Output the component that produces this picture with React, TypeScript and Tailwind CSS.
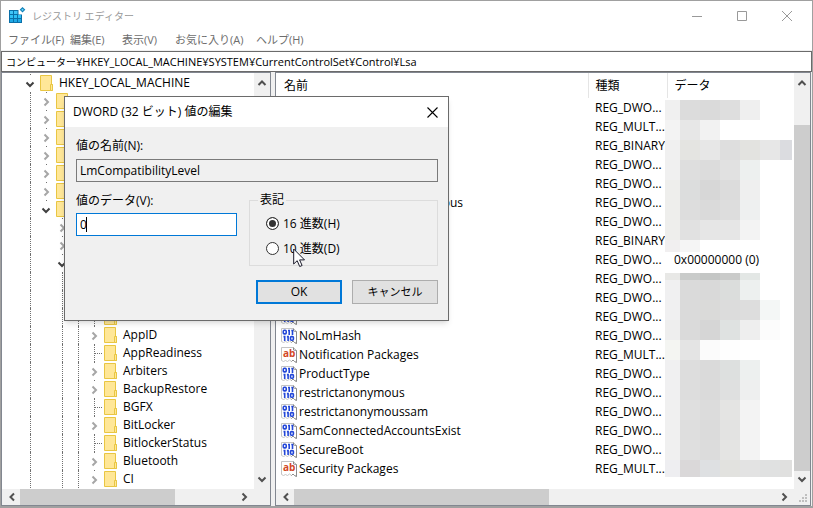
import type { ReactNode } from "react";

type TreeNode = {
  level: number;
  label: string;
  state: "open" | "closed" | "leaf";
};

type RegValue = {
  name: string;
  kind: "bin" | "str";
  type: string;
  data?: string;
};

const tree: TreeNode[] = [
  { level: 0, label: "HKEY_LOCAL_MACHINE", state: "open" },
  { level: 1, label: "BCD", state: "closed" },
  { level: 1, label: "", state: "closed" },
  { level: 1, label: "", state: "closed" },
  { level: 1, label: "", state: "closed" },
  { level: 1, label: "", state: "closed" },
  { level: 1, label: "", state: "closed" },
  { level: 1, label: "", state: "open" },
  { level: 2, label: "", state: "closed" },
  { level: 2, label: "", state: "closed" },
  { level: 2, label: "", state: "open" },
  { level: 3, label: "", state: "open" },
  { level: 4, label: "", state: "closed" },
  { level: 4, label: "ACPI", state: "leaf" },
  { level: 4, label: "AppID", state: "closed" },
  { level: 4, label: "AppReadiness", state: "leaf" },
  { level: 4, label: "Arbiters", state: "closed" },
  { level: 4, label: "BackupRestore", state: "closed" },
  { level: 4, label: "BGFX", state: "leaf" },
  { level: 4, label: "BitLocker", state: "closed" },
  { level: 4, label: "BitlockerStatus", state: "leaf" },
  { level: 4, label: "Bluetooth", state: "closed" },
  { level: 4, label: "CI", state: "closed" },
];

const values: RegValue[] = [
  { name: "", kind: "bin", type: "REG_DWO..." },
  { name: "", kind: "str", type: "REG_MULT..." },
  { name: "", kind: "bin", type: "REG_BINARY" },
  { name: "", kind: "bin", type: "REG_DWO..." },
  { name: "", kind: "bin", type: "REG_DWO..." },
  { name: "everyoneincludesanonymous", kind: "bin", type: "REG_DWO..." },
  { name: "", kind: "bin", type: "REG_DWO..." },
  { name: "", kind: "bin", type: "REG_BINARY" },
  { name: "", kind: "bin", type: "REG_DWO...", data: "0x00000000 (0)" },
  { name: "", kind: "bin", type: "REG_DWO..." },
  { name: "", kind: "bin", type: "REG_DWO..." },
  { name: "LsaPid", kind: "bin", type: "REG_DWO..." },
  { name: "NoLmHash", kind: "bin", type: "REG_DWO..." },
  { name: "Notification Packages", kind: "str", type: "REG_MULT..." },
  { name: "ProductType", kind: "bin", type: "REG_DWO..." },
  { name: "restrictanonymous", kind: "bin", type: "REG_DWO..." },
  { name: "restrictanonymoussam", kind: "bin", type: "REG_DWO..." },
  { name: "SamConnectedAccountsExist", kind: "bin", type: "REG_DWO..." },
  { name: "SecureBoot", kind: "bin", type: "REG_DWO..." },
  { name: "Security Packages", kind: "str", type: "REG_MULT..." },
];

// Masked data: y, height, then one colour per 20px block
const mosaic: [number, number, string[]][] = [
  [0, 20, ["#f0f0f0", "#dcdcdc", "#dadada", "#dedede", "#efefef"]],
  [20, 20, ["#f3f3f3", "#e7e7e7", "#f2f2f2"]],
  [40, 20, ["#f0f0f0", "#e4e4e1", "#e7e7e7", "#dedede", "#e3e3e0", "#e7e7e7", "#dbdce0"]],
  [60, 20, ["#f0f0f0", "#dedede", "#dcdcdc", "#e1e1e1", "#edf0ef"]],
  [80, 20, ["#eeeeec", "#dcdddd", "#d7d7d7", "#dcdcdc", "#efefef"]],
  [100, 20, ["#eeeeec", "#dddddd", "#dadada", "#dddddd", "#eef0f0"]],
  [120, 20, ["#eeeeec", "#e1e1e1", "#e6e6e6", "#e6e6e6", "#f3f3f3"]],
  [140, 12, ["#f1eff0", "#f5f5f5"]],
  [173, 7, ["#e8e8e6", "#c9cbca", "#c4c6c5", "#cacbca", "#e3e7e5"]],
  [180, 20, ["#f0f0f1", "#dadada", "#d9d9d9", "#dbdddc", "#edf0ef"]],
  [200, 20, ["#f0f0f1", "#dadada", "#dadad9", "#dcdcdc", "#dddddd", "#f4f7f6"]],
  [220, 20, ["#eeeeee", "#dadada", "#d6d6d6", "#dfe2e1", "#eeeeee", "#fcfcfc"]],
  [240, 20, ["#f4f5f2", "#e4e4e4", "#fbfbfb", "#fefefe"]],
  [260, 20, ["#f0f0f1", "#dddddd", "#dadada", "#dde0df", "#edf0ef"]],
  [280, 20, ["#f0f0f1", "#dddddd", "#dadada", "#dfe0e0", "#eeefef"]],
  [300, 20, ["#f0f0f0", "#dfdfdf", "#dcdcdc", "#e4e4e3", "#f3f3f3"]],
  [320, 20, ["#f0f0f0", "#dedede", "#dbdbdb", "#e3e3e2", "#f3f3f3"]],
  [340, 20, ["#f0f0f0", "#dfdfdf", "#dcdcdc", "#e4e4e3", "#f3f3f3"]],
  [360, 17, ["#eeeef1", "#dad8d9", "#dee0e2", "#e2e2df", "#e3e3e3", "#e0e1e1", "#e0e0df"]],
];

const chevrons = {
  up: "M1.5 7 5 3.5 8.5 7",
  down: "M1.5 3.5 5 7 8.5 3.5",
  left: "M7 1.5 3.5 5 7 8.5",
  right: "M3.5 1.5 7 5 3.5 8.5",
};

const Chevron = ({ dir, className }: { dir: keyof typeof chevrons; className?: string }) => (
  <svg width="10" height="10" viewBox="0 0 10 10" fill="none" stroke="currentColor" strokeWidth="2" className={className}>
    <path d={chevrons[dir]} />
  </svg>
);

const RegeditIcon = () => (
  <svg width="17" height="17" viewBox="0 0 17 17" className="shrink-0">
    <path d="M0 3h9.500v4.500H13V16H0z" fill="#0a6fa8" />
    <path d="M1 4h3v3H1zM5 4h3.500v3H5z" fill="#3fc4f7" />
    <path d="M1 8h3v3H1zM5 8h3v3H5zM9 8h3v3H9z" fill="#2fc0f5" />
    <path d="M1 12h3v3H1zM5 12h3v3H5zM9 12h3v3H9z" fill="#1ea9e6" />
    <path d="M13.500 0 16.300 2.800 13.500 5.600 10.700 2.800z" fill="#0a7db5" />
    <circle cx="13.500" cy="2.800" r="1" fill="#6fd6fb" />
  </svg>
);

const FolderIcon = () => (
  <svg width="13" height="16" viewBox="0 0 13 16" className="shrink-0">
    <path d="M.5.500h11v9h1v6H.5z" fill="#ffe798" stroke="#e9c643" />
    <path d="M10.500 15.500v-6h2v6z" fill="#ffe798" stroke="#e9c643" />
  </svg>
);

const ValueIcon = ({ kind }: { kind: RegValue["kind"] }) => (
  <svg width="16" height="16" viewBox="0 0 16 16" fill="none" className="shrink-0">
    <path d="M.5.500h12l3 3v12l-2-1-1.500-1.500-1.500 1.500-2-1.500-2 1.500-2-1-2 1-2-1z" fill="#fff" stroke="#c4c4c4" />
    <path d="M12.500.500v2.500l3 .5v12l-2-1-1.500-1.500-1.500 1.500" stroke="#8c8c8c" />
    {kind === "bin" ? (
      <g stroke="#2347d8" strokeWidth="1.600">
        <rect x="2.300" y="2.300" width="2.900" height="3.600" rx="1" />
        <path d="M7 2.500h1.200v4.400M10.300 2.500h1.200v4.400" />
        <path d="M2.500 8.600h1.200v4.400M5.900 8.600h1.200v4.400" />
        <rect x="9.500" y="8.600" width="2.900" height="3.600" rx="1" />
      </g>
    ) : (
      <text x="2" y="10" fill="#d24726" fontSize="10" className="font-['Open_Sans',sans-serif] font-bold">
        ab
      </text>
    )}
  </svg>
);

const Toggle = ({ state }: { state: TreeNode["state"] }) => {
  if (state === "leaf") {
    return (
      <span className="flex h-full w-4 items-center pl-2">
        <span className="h-full border-l border-dotted border-[#707070]" />
        <span className="flex-1 border-t border-dotted border-[#707070]" />
      </span>
    );
  }
  return (
    <span className="flex h-full w-4 flex-col items-center">
      <span className="h-px w-px bg-[#707070]" />
      <span className="flex flex-1 items-center">
        <Chevron
          dir={state === "open" ? "down" : "right"}
          className={state === "open" ? "text-[#404040]" : "text-[#a6a6a6]"}
        />
      </span>
    </span>
  );
};

const TreeRow = ({ node }: { node: TreeNode }) => (
  <li className="flex h-[18px] items-center whitespace-nowrap pl-5">
    {Array.from({ length: node.level }, (_, i) => (
      <span key={i} className="flex h-full w-4 shrink-0 pl-2">
        {i !== 1 && <span className="border-l border-dotted border-[#707070]" />}
      </span>
    ))}
    <Toggle state={node.state} />
    <span className="flex items-center gap-1.5 pl-0.5">
      <FolderIcon />
      {node.label}
    </span>
  </li>
);

const ScrollButton = ({ dir, label }: { dir: keyof typeof chevrons; label: string }) => (
  <button aria-label={label} className="flex size-4 shrink-0 items-center justify-center text-[#505050]">
    <Chevron dir={dir} />
  </button>
);

const VScroll = ({ children }: { children?: ReactNode }) => (
  <div className="flex w-4 shrink-0 flex-col bg-[#f0f0f0] py-0.5">
    <ScrollButton dir="up" label="上へ" />
    <div className="flex min-h-0 flex-1 flex-col">{children}</div>
    <ScrollButton dir="down" label="下へ" />
  </div>
);

const HScroll = ({ children }: { children?: ReactNode }) => (
  <div className="flex h-4 min-w-0 flex-1 bg-[#f0f0f0] px-0.5">
    <ScrollButton dir="left" label="左へ" />
    <div className="flex min-w-0 flex-1">{children}</div>
    <ScrollButton dir="right" label="右へ" />
  </div>
);

const EditDialog = () => (
  <div
    role="dialog"
    aria-labelledby="dialog-title"
    className="absolute left-[63px] top-[95px] w-[385px] border border-[#6b6b6b] bg-[#f0f0f0] shadow-md"
  >
    <div className="flex h-[30px] items-center justify-between bg-white pl-2 pr-2.5">
      <h2 id="dialog-title">DWORD (32 ビット) 値の編集</h2>
      <button aria-label="閉じる">
        <svg width="11" height="11" viewBox="0 0 11 11" stroke="#000" strokeWidth="1.100">
          <path d="M.5.500l10 10M10.500.500l-10 10" />
        </svg>
      </button>
    </div>
    <form className="pb-4 pl-[11px] pr-2.5 pt-2.5">
      <label htmlFor="value-name" className="block h-[22px] leading-[18px]">
        値の名前(N):
      </label>
      <input
        id="value-name"
        readOnly
        defaultValue="LmCompatibilityLevel"
        className="block h-[23px] w-full border border-[#7a7a7a] bg-[#f0f0f0] px-[3px] outline-none"
      />
      <div className="mt-2.5 flex items-start justify-between gap-3">
        <div className="flex-1">
          <label htmlFor="value-data" className="block h-[21px] leading-[18px]">
            値のデータ(V):
          </label>
          <div className="relative">
            <input
              id="value-data"
              defaultValue="0"
              className="block h-[23px] w-full border border-[#0078d7] bg-white px-[3px] outline-none"
            />
            <span className="absolute left-2.5 top-1 h-[15px] w-px bg-black" />
          </div>
        </div>
        <fieldset className="w-[189px] border border-[#dcdcdc] px-4 pb-1 pt-[3px]">
          <legend className="-ml-2 px-0.5 leading-4">表記</legend>
          {["16 進数(H)", "10 進数(D)"].map((text, i) => (
            <label key={text} className="flex h-[25px] items-center gap-1 whitespace-nowrap">
              <input
                type="radio"
                name="base"
                defaultChecked={i === 0}
                className="size-[13px] appearance-none rounded-full border border-[#333] bg-white checked:border-[#333] checked:bg-[#333] checked:shadow-[inset_0_0_0_2px_#fff]"
              />
              {text}
            </label>
          ))}
        </fieldset>
      </div>
      <div className="mt-[14px] flex justify-end gap-2.5">
        <button type="button" className="flex h-6 w-[86px] items-center justify-center border-2 border-[#0078d7] bg-[#e1e1e1]">
          OK
        </button>
        <button type="button" className="flex h-6 w-[86px] items-center justify-center border border-[#adadad] bg-[#e1e1e1] text-[11px]">
          キャンセル
        </button>
      </div>
    </form>
  </div>
);

const App = () => {
  return (
    <div className="relative flex h-screen flex-col overflow-hidden border border-b-2 border-[#a0a0a0] bg-[#f0f0f0] font-['Open_Sans','Noto_Sans_CJK_JP',sans-serif] text-[12px] leading-4 text-black">
      {/* Title bar */}
      <header className="flex h-[29px] shrink-0 items-center justify-between bg-white pl-2 pr-5 text-[#999]">
        <div className="flex items-center gap-1.5">
          <RegeditIcon />
          <h1 className="text-[10px]">レジストリ エディター</h1>
        </div>
        <div className="flex gap-[35px]">
          <button aria-label="最小化">
            <svg width="10" height="10" stroke="currentColor"><path d="M0 5.500h10" /></svg>
          </button>
          <button aria-label="最大化">
            <svg width="10" height="10" stroke="currentColor" fill="none"><path d="M.5.500h9v9h-9z" /></svg>
          </button>
          <button aria-label="閉じる">
            <svg width="10" height="10" stroke="currentColor"><path d="M0 0l10 10M10 0L0 10" /></svg>
          </button>
        </div>
      </header>

      {/* Menu bar */}
      <nav className="grid h-5 shrink-0 grid-cols-[62px_52px_53px_81px_auto] items-center bg-white pl-[7px] text-[11px] text-[#6d6d6d]">
        {["ファイル(F)", "編集(E)", "表示(V)", "お気に入り(A)", "ヘルプ(H)"].map((item) => (
          <button key={item} className="whitespace-nowrap text-left">
            {item}
          </button>
        ))}
      </nav>

      {/* Address bar */}
      <div className="mt-px flex h-[21px] shrink-0 items-center border border-[#6b6b6b] bg-white px-1">
        <span className="text-[10px]">コンピューター</span>
        <span className="text-[11px]">¥HKEY_LOCAL_MACHINE¥SYSTEM¥CurrentControlSet¥Control¥Lsa</span>
      </div>

      <main className="flex min-h-0 flex-1 gap-1">
        {/* Keys */}
        <section className="flex w-[270px] shrink-0 flex-col border border-[#828790] bg-white">
          <div className="flex min-h-0 flex-1">
            <ul className="min-w-0 flex-1 overflow-hidden pt-px">
              {tree.map((node, i) => (
                <TreeRow key={i} node={node} />
              ))}
            </ul>
            <VScroll />
          </div>
          <div className="flex bg-[#f0f0f0] pr-4">
            <HScroll>
              <div className="w-[155px] bg-[#cdcdcd]" />
            </HScroll>
          </div>
        </section>

        {/* Values */}
        <section className="mr-px flex min-w-0 flex-1 flex-col border border-[#828790] bg-white">
          <div className="flex min-h-0 flex-1">
            <div className="relative min-w-0 flex-1 overflow-hidden">
              <table className="w-full table-fixed text-left">
                <thead>
                  <tr className="h-[25px]">
                    <th className="border-r border-[#e5e5e5] pl-2 font-normal">名前</th>
                    <th className="w-[79px] border-r border-[#e5e5e5] pl-[7px] font-normal">種類</th>
                    <th className="w-[127px] pl-[7px] font-normal">データ</th>
                  </tr>
                </thead>
                <tbody>
                  {values.map((v, i) => (
                    <tr key={i} className="h-[19px] whitespace-nowrap">
                      <td className="py-0 pl-[5px]">
                        <span className="flex items-center gap-0.5">
                          <ValueIcon kind={v.kind} />
                          {v.name}
                        </span>
                      </td>
                      <td className="py-0 pl-[7px]">{v.type}</td>
                      <td className="py-0 pl-[7px]">{v.data}</td>
                    </tr>
                  ))}
                </tbody>
              </table>
              <svg width="127" height="377" className="absolute right-0.5 top-[27px]" shapeRendering="crispEdges">
                {mosaic.map(([y, h, colors]) =>
                  colors.map((c, i) => (
                    <rect
                      key={`${y}-${i}`}
                      x={i === 0 ? 0 : i * 20 - 5}
                      y={y}
                      width={i === 0 ? 15 : i === 6 ? 12 : 20}
                      height={h}
                      fill={c}
                    />
                  ))
                )}
              </svg>
            </div>
            <VScroll>
              <div className="mt-[34px] flex-1 bg-[#cdcdcd]" />
            </VScroll>
          </div>
          <div className="flex bg-[#f0f0f0]">
            <HScroll>
              <div className="w-[53%] bg-[#cdcdcd]" />
            </HScroll>
            <svg width="16" height="16" fill="#bfbfbf">
              <path d="M11 5h2v2h-2zM8 8h2v2H8zM11 8h2v2h-2zM5 11h2v2H5zM8 11h2v2H8zM11 11h2v2h-2z" />
            </svg>
          </div>
        </section>
      </main>

      <EditDialog />

      {/* Mouse pointer */}
      <svg width="13" height="20" viewBox="0 0 13 20" className="absolute left-[292px] top-[247px]">
        <path d="M.7 1v15l3.500-3.300 2.500 5.800 2.400-1-2.500-5.600h4.900z" fill="#fff" stroke="#1a1a2a" />
      </svg>
    </div>
  );
};

export default App;
